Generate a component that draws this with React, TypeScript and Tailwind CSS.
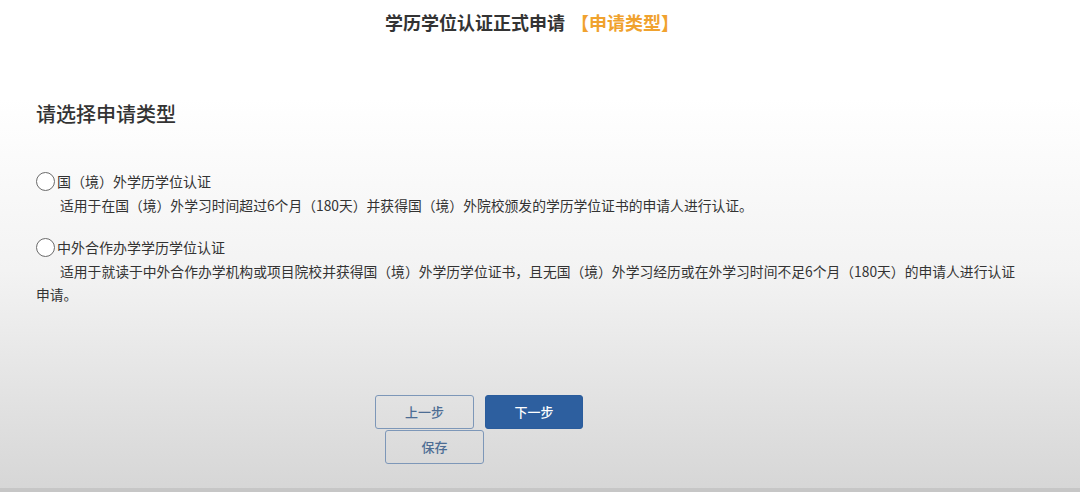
const FONT = "font-['Noto_Sans_CJK_SC','Noto_Sans',sans-serif]"

interface Option {
  id: string
  label: string
  desc: string
}

const OPTIONS: Option[] = [
  {
    id: 'abroad',
    label: '国（境）外学历学位认证',
    desc: '适用于在国（境）外学习时间超过6个月（180天）并获得国（境）外院校颁发的学历学位证书的申请人进行认证。',
  },
  {
    id: 'joint',
    label: '中外合作办学学历学位认证',
    desc: '适用于就读于中外合作办学机构或项目院校并获得国（境）外学历学位证书，且无国（境）外学习经历或在外学习时间不足6个月（180天）的申请人进行认证申请。',
  },
]

function RadioOption({ option }: { option: Option }) {
  return (
    <div className="flex flex-col">
      <label className="flex items-center gap-[2px] cursor-pointer">
        <span className="h-[19px] w-[19px] shrink-0 rounded-full border-[1.5px] border-[#6b6b6b] bg-white" />
        <span className="text-[14px] leading-[20px] text-[#333]">{option.label}</span>
      </label>
      <p className="mt-[3px] pr-[22px] indent-[24px] text-[13.8px] leading-[23px] text-[#333]">{option.desc}</p>
    </div>
  )
}

export default function App() {
  return (
    <div className={`${FONT} relative flex h-[492px] w-full flex-col overflow-hidden bg-gradient-to-b from-white from-20% via-[#f3f3f3] via-55% to-[#d6d6d6]`}>
      {/* Title */}
      <div className="flex justify-center pt-[9px] pr-[16px]">
        <h1 className="text-[18px] font-bold leading-[26px] text-[#333]">
          学历学位认证正式申请
          <span className="ml-[6px] text-[#f0a22e]">【申请类型】</span>
        </h1>
      </div>

      <div className="flex flex-col px-[36px]">
        <h2 className="mt-[65px] text-[20px] font-medium leading-[28px] text-[#333]">请选择申请类型</h2>

        <div className="mt-[43px] flex flex-col gap-[20px]">
          {OPTIONS.map(o => (
            <RadioOption key={o.id} option={o} />
          ))}
        </div>
      </div>

      {/* Buttons */}
      <div className="mt-[89px] ml-[375px] flex flex-col">
        <div className="flex gap-[11px]">
          <button className="h-[34px] w-[99px] rounded-[3px] border border-[#7d97b8] bg-transparent text-[13px] font-medium text-[#4d6d94]">
            上一步
          </button>
          <button className="h-[34px] w-[98px] rounded-[3px] border border-[#2a5c9c] bg-[#2d5f9f] text-[13px] font-medium text-white">
            下一步
          </button>
        </div>
        <button className="ml-[10px] mt-[1px] h-[34px] w-[99px] rounded-[3px] border border-[#7d97b8] bg-transparent text-[13px] font-medium text-[#4d6d94]">
          保存
        </button>
      </div>

      <div className="absolute bottom-0 left-0 h-[4px] w-full bg-[#c6c6c6]" />
    </div>
  )
}
